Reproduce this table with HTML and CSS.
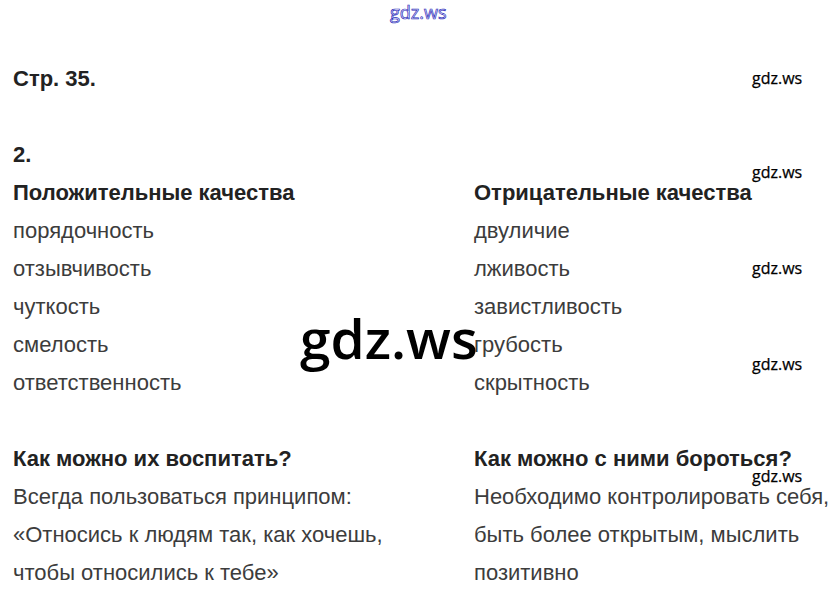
FILE: index.html
```html
<!DOCTYPE html>
<html lang="ru">
<head>
<meta charset="utf-8">
<link rel="stylesheet" href="styles.css">
</head>
<body>
<div class="page">
  <div class="line title">Стр. 35.</div>
  <div class="line empty"></div>
  <div class="line title">2.</div>
  <div class="cols">
    <div class="col">
      <div class="line head">Положительные качества</div>
      <div class="line">порядочность</div>
      <div class="line">отзывчивость</div>
      <div class="line">чуткость</div>
      <div class="line">смелость</div>
      <div class="line">ответственность</div>
      <div class="line empty"></div>
      <div class="line head">Как можно их воспитать?</div>
      <div class="line">Всегда пользоваться принципом:</div>
      <div class="line">«Относись к людям так, как хочешь,</div>
      <div class="line">чтобы относились к тебе»</div>
    </div>
    <div class="col">
      <div class="line head">Отрицательные качества</div>
      <div class="line">двуличие</div>
      <div class="line">лживость</div>
      <div class="line">завистливость</div>
      <div class="line">грубость</div>
      <div class="line">скрытность</div>
      <div class="line empty"></div>
      <div class="line head">Как можно с ними бороться?</div>
      <div class="line">Необходимо контролировать себя,</div>
      <div class="line">быть более открытым, мыслить</div>
      <div class="line">позитивно</div>
    </div>
  </div>
  <div class="wm-top">gdz.ws</div>
  <div class="wm wm1">gdz.ws</div>
  <div class="wm wm2">gdz.ws</div>
  <div class="wm wm3">gdz.ws</div>
  <div class="wm wm4">gdz.ws</div>
  <div class="wm wm5">gdz.ws</div>
  <div class="wm-big">gdz.ws</div>
</div>
</body>
</html>
```

FILE: styles.css
```css
html, body {
  margin: 0;
  padding: 0;
  background: #ffffff;
}
.page {
  position: relative;
  width: 838px;
  height: 597px;
  padding: 60px 0 0 13px;
  box-sizing: border-box;
  font-family: "Liberation Sans", Arial, sans-serif;
  font-size: 22px;
  color: #3c3c3c;
  overflow: hidden;
}
.line {
  height: 38px;
  line-height: 38px;
  white-space: nowrap;
}
.title, .head {
  font-weight: bold;
  color: #222222;
}
.cols {
  display: grid;
  grid-template-columns: 461px 1fr;
}
.wm-top {
  position: absolute;
  left: 390px;
  top: 0;
  font-family: "Open Sans", sans-serif;
  font-size: 18px;
  line-height: 24px;
  color: #eef;
  -webkit-text-stroke: 0.7px #2a2ab8;
}
.wm {
  position: absolute;
  left: 752px;
  font-family: "Open Sans", sans-serif;
  font-size: 16px;
  line-height: 20px;
  color: #000;
  -webkit-text-stroke: 0.25px #000;
}
.wm1 { top: 68px; }
.wm2 { top: 162px; }
.wm3 { top: 258px; }
.wm4 { top: 354px; }
.wm5 { top: 466px; }
.wm-big {
  position: absolute;
  left: 300px;
  top: 298px;
  font-family: "Open Sans", sans-serif;
  font-weight: 600;
  font-size: 55px;
  line-height: 80px;
  color: #000;
}
```
